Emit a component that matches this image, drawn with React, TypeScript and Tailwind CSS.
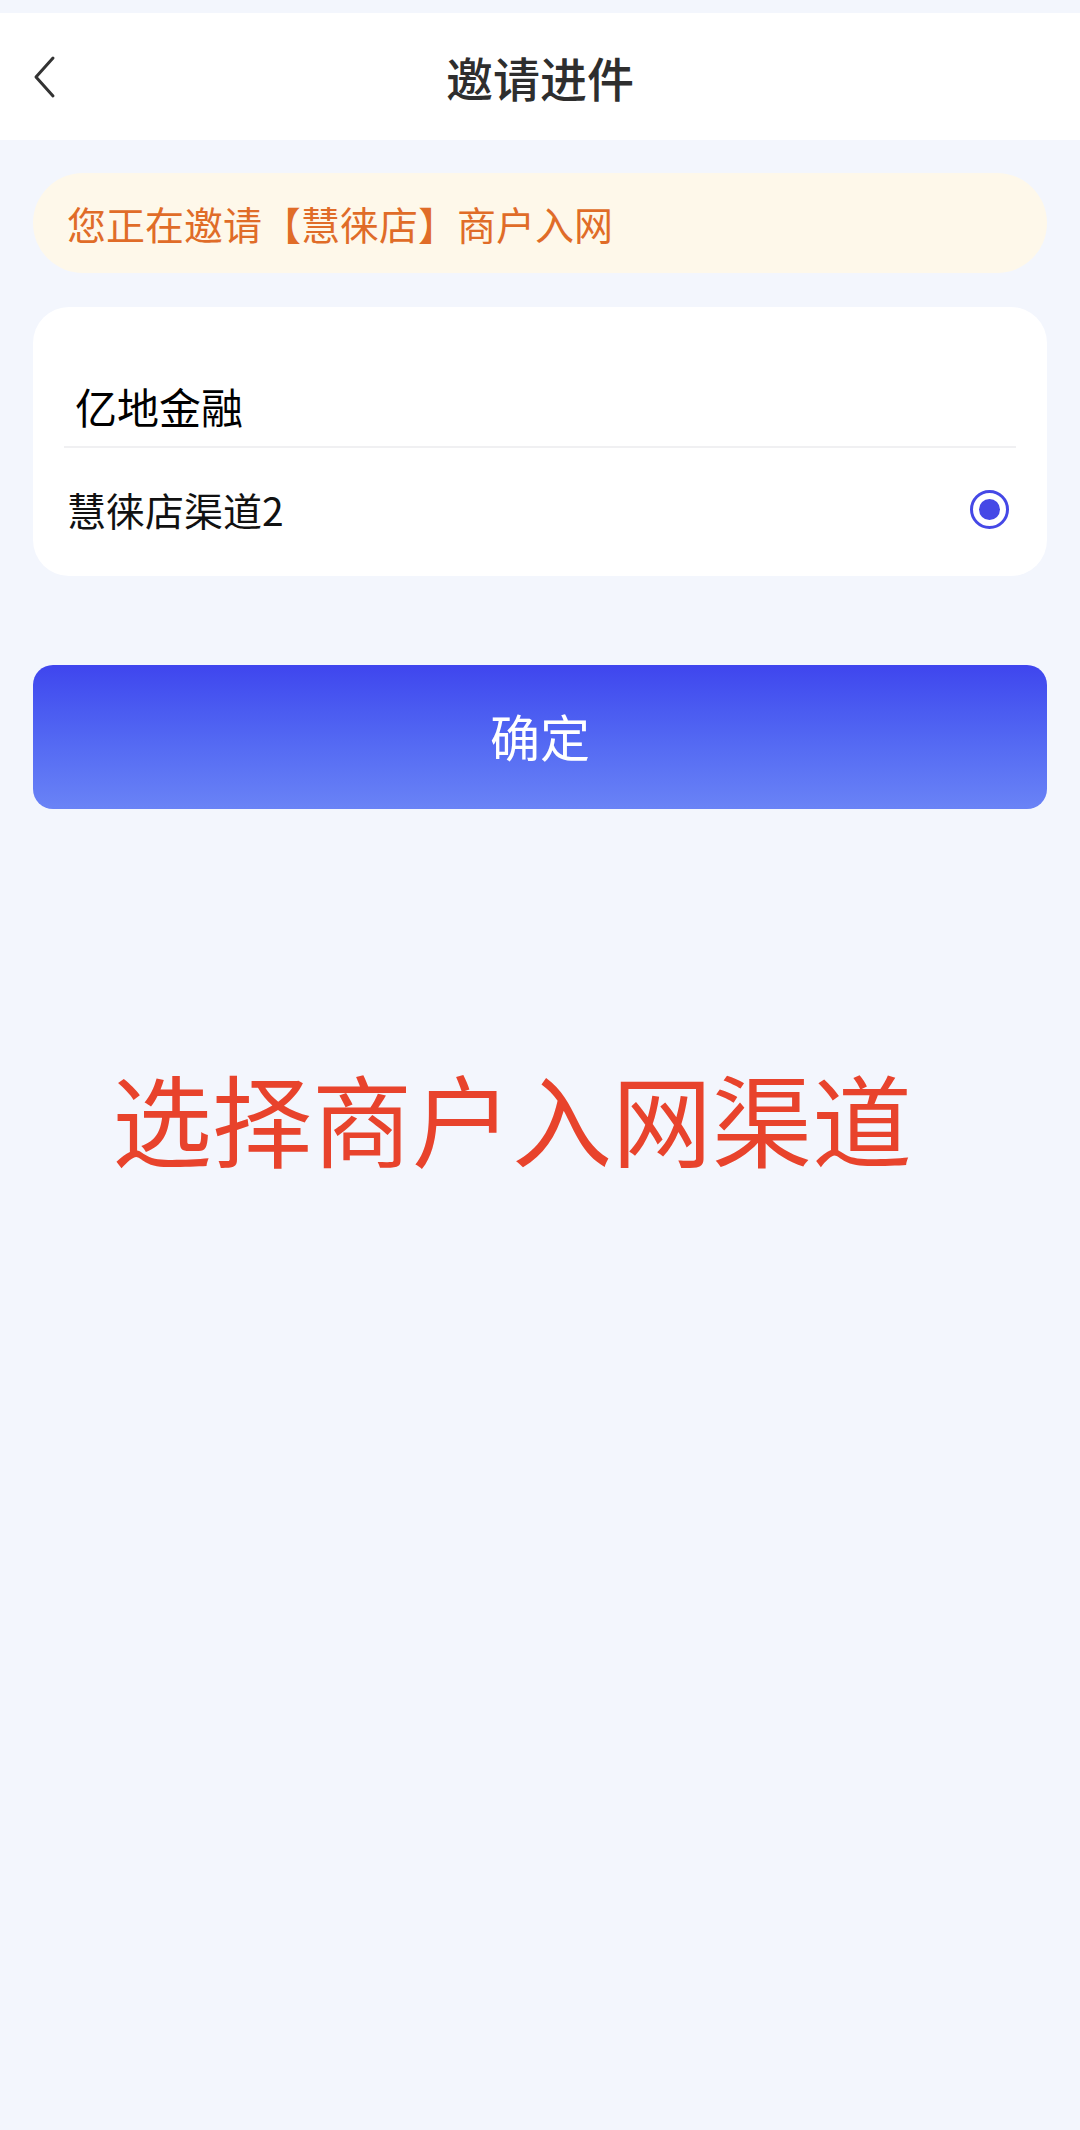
export default function App() {
  const font = { fontFamily: '"Noto Sans CJK SC", "Noto Sans", sans-serif' };

  return (
    <div className="min-h-[2130px] w-[1080px] bg-[#f3f6fd]" style={font}>
      {/* header */}
      <div className="pt-[13px]">
        <div className="relative flex h-[127px] items-center justify-center bg-white">
          <button className="absolute left-[28px] top-[40px] flex h-[48px] w-[32px] items-center justify-center">
            <svg width="24" height="44" viewBox="0 0 24 44" fill="none">
              <path d="M21 3 L4 22 L21 41" stroke="#333333" strokeWidth="3" strokeLinecap="round" strokeLinejoin="round" />
            </svg>
          </button>
          <h1 className="text-[47px] font-medium leading-none text-[#2e2e2e]">邀请进件</h1>
        </div>
      </div>

      <div className="px-[33px]">
        {/* notice */}
        <div className="mt-[33px] flex h-[100px] items-center rounded-full bg-[#fef8ea] px-[34px]">
          <span className="text-[39px] leading-none text-[#e06c28]">您正在邀请【慧徕店】商户入网</span>
        </div>

        {/* channel card */}
        <div className="mt-[34px] rounded-[36px] bg-white px-[31px]">
          <div className="border-b-2 border-[#f0f0f2] pb-[19px] pt-[78px]">
            <span className="ml-[11px] block text-[42px] leading-[42px] text-black">亿地金融</span>
          </div>
          <div className="flex h-[128px] items-center justify-between pb-[6px]">
            <span className="ml-[3px] text-[39px] leading-none text-[#111111]">慧徕店渠道2</span>
            <span className="mr-[7px] flex h-[39px] w-[39px] items-center justify-center rounded-full border-[3px] border-[#4548e6] bg-white">
              <span className="h-[21px] w-[21px] rounded-full bg-[#4548e6]" />
            </span>
          </div>
        </div>

        {/* confirm */}
        <button className="mt-[89px] flex h-[144px] w-full items-center justify-center rounded-[20px] bg-gradient-to-b from-[#3f45ee] to-[#6a83f6]">
          <span className="mb-[4px] text-[50px] leading-none text-white">确定</span>
        </button>
      </div>

      <p className="ml-[112px] mt-[258px] text-[100px] leading-none text-[#e8432c]">选择商户入网渠道</p>
    </div>
  );
}
